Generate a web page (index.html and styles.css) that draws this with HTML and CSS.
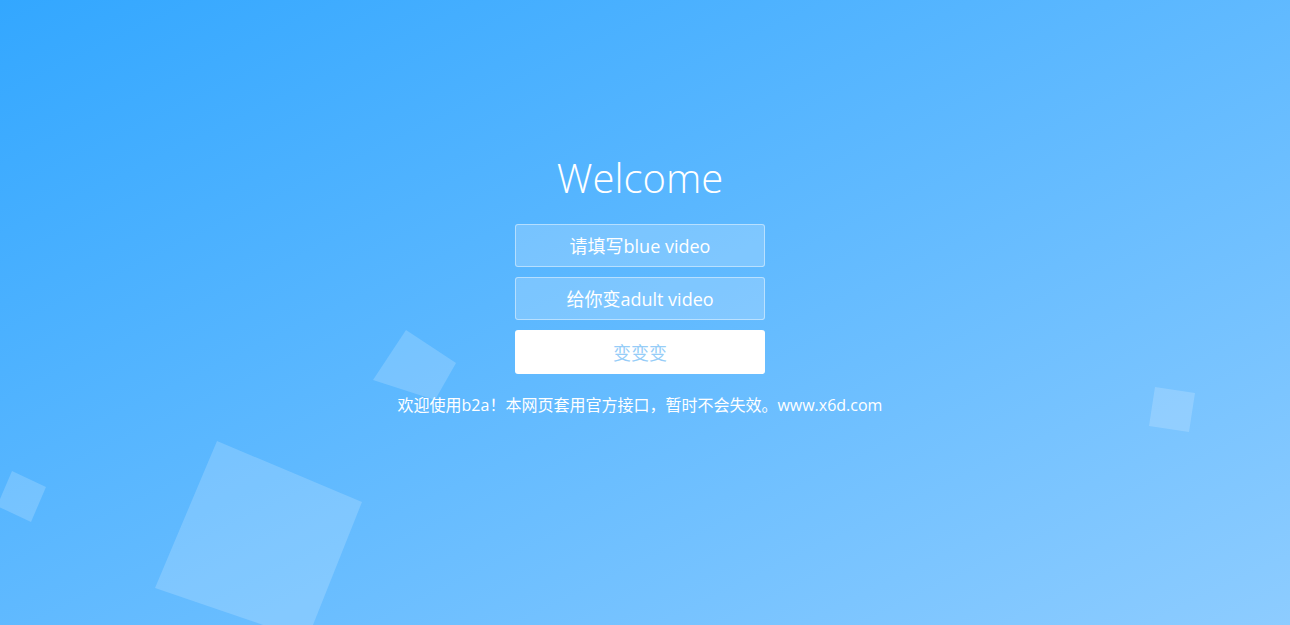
FILE: index.html
```html
<!DOCTYPE html>
<html lang="zh-CN">
<head>
<meta charset="utf-8">
<title>Welcome</title>
<link rel="stylesheet" href="styles.css">
</head>
<body>
<div class="page">
  <svg class="bubbles" width="1290" height="625" viewBox="0 0 1290 625" aria-hidden="true">
    <polygon points="406,330 456,363 435,400 373,380" />
    <polygon points="217,441 362,502 307,640 155,588" />
    <polygon points="12,471 46,487 31,522 -3,506" />
    <polygon points="1155,387 1195,393 1189,432 1149,426" />
  </svg>
  <div class="container">
    <h1 class="title">Welcome</h1>
    <form class="form">
      <input class="field" type="text" placeholder="请填写blue video">
      <input class="field" type="text" placeholder="给你变adult video">
      <button class="btn" type="button">变变变</button>
    </form>
    <p class="note">欢迎使用b2a！本网页套用官方接口，暂时不会失效。www.x6d.com</p>
  </div>
</div>
</body>
</html>
```

FILE: styles.css
```css
* { box-sizing: border-box; }
html, body {
  margin: 0;
  padding: 0;
  width: 100%;
  height: 100%;
  overflow: hidden;
}
body {
  font-family: "Open Sans", "Noto Sans CJK SC", sans-serif;
  color: #fff;
}
.page {
  position: relative;
  width: 100%;
  height: 625px;
  background: linear-gradient(to bottom right, #33a7ff 0%, #8dccff 100%);
  overflow: hidden;
}
.bubbles {
  position: absolute;
  left: 0;
  top: 0;
}
.bubbles polygon {
  fill: rgba(255, 255, 255, 0.18);
}
.container {
  position: relative;
  display: flex;
  flex-direction: column;
  align-items: center;
  padding-top: 150px;
  padding-right: 10px;
}
.title {
  margin: 0;
  font-family: "Open Sans", sans-serif;
  font-weight: 300;
  font-size: 40px;
  line-height: 56px;
  color: #fff;
}
.form {
  display: flex;
  flex-direction: column;
  align-items: center;
  gap: 10px;
  margin-top: 18px;
}
.field, .btn {
  width: 250px;
  height: 43px;
  border-radius: 3px;
  font-family: "Open Sans", "Noto Sans CJK SC", sans-serif;
  font-size: 18px;
  text-align: center;
  outline: none;
}
.field {
  border: 1px solid rgba(255, 255, 255, 0.45);
  background: rgba(255, 255, 255, 0.2);
  color: #fff;
}
.field::placeholder {
  color: #fff;
  opacity: 1;
}
.btn {
  border: 0;
  background: #fff;
  color: #96cdf8;
  height: 44px;
}
.note {
  margin: 20px 0 0;
  font-size: 16px;
  line-height: 22px;
  color: #fff;
}
```
